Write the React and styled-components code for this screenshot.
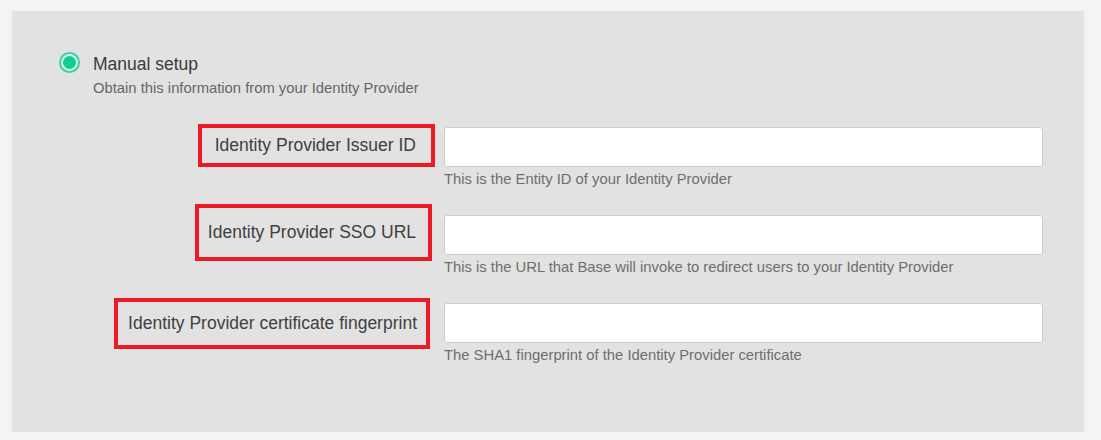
import React from "react";
import styled, { createGlobalStyle } from "styled-components";

const GlobalStyle = createGlobalStyle`
    html, body {
        margin: 0;
        padding: 0;
        background: #f4f4f4;
        font-family: "Liberation Sans", Arial, sans-serif;
    }
`;

const Page = styled.div`
    padding: 11px 17px 8px 12px;
    height: 440px;
    box-sizing: border-box;
`;

const Panel = styled.section`
    background: #e2e2e2;
    height: 421px;
    box-sizing: border-box;
    padding: 40px 0 0 0;
`;

const Choice = styled.div`
    display: flex;
    align-items: flex-start;
    gap: 13px;
    padding-left: 47px;
`;

const Radio = styled.span`
    width: 21px;
    height: 21px;
    box-sizing: border-box;
    border-radius: 50%;
    border: 2px solid #2ad9a4;
    background: #ececec;
    display: flex;
    align-items: center;
    justify-content: center;
    margin-top: 1px;
    flex-shrink: 0;

    &::after {
        content: "";
        width: 13px;
        height: 13px;
        border-radius: 50%;
        background: #0ccf92;
    }
`;

const ChoiceText = styled.div`
    display: flex;
    flex-direction: column;
`;

const ChoiceTitle = styled.span`
    font-size: 17.5px;
    line-height: 20px;
    color: #3a3a3a;
    margin-top: 3px;
`;

const ChoiceHint = styled.span`
    font-size: 14.8px;
    line-height: 17px;
    color: #666;
    margin-top: 6px;
`;

const Form = styled.div`
    display: flex;
    flex-direction: column;
    gap: 27px;
    margin-top: 30px;
`;

const Row = styled.div`
    display: grid;
    grid-template-columns: 428px 599px;
    column-gap: 4px;
    align-items: start;
`;

const LabelCell = styled.div`
    grid-row: 1;
    grid-column: 1;
    display: flex;
    justify-content: flex-end;
    margin-bottom: -30px;
`;

// red annotation box around the label
const Label = styled.label`
    display: inline-block;
    font-size: 17.5px;
    line-height: 19px;
    color: #404040;
    white-space: nowrap;
    border: 4px solid #ed1c24;
    padding: ${p => p.$py}px ${p => p.$pr}px ${p => p.$py}px ${p => p.$pl}px;
    margin-top: ${p => p.$top}px;
    margin-right: ${p => p.$right}px;
`;

const Input = styled.input`
    grid-row: 1;
    grid-column: 2;
    height: 40px;
    box-sizing: border-box;
    border: 1px solid #cccccc;
    border-radius: 3px;
    background: #fff;
    margin: 0;
    padding: 0 10px;
    font: inherit;
    outline: none;
`;

const Help = styled.span`
    grid-row: 2;
    grid-column: 2;
    font-size: 14.8px;
    line-height: 17px;
    color: #6e6e6e;
    margin-top: 4px;
`;

const fields = [
    {
        label: "Identity Provider Issuer ID",
        help: "This is the Entity ID of your Identity Provider",
        box: { py: 8, pl: 13, pr: 15, top: -3, right: 5 },
    },
    {
        label: "Identity Provider SSO URL",
        help: "This is the URL that Base will invoke to redirect users to your Identity Provider",
        box: { py: 15, pl: 9, pr: 12, top: -11, right: 8 },
    },
    {
        label: "Identity Provider certificate fingerprint",
        help: "The SHA1 fingerprint of the Identity Provider certificate",
        box: { py: 12, pl: 10, pr: 9, top: -5, right: 10 },
    },
];

export default function App() {
    return (
        <Page>
            <GlobalStyle />
            <Panel>
                <Choice>
                    <Radio />
                    <ChoiceText>
                        <ChoiceTitle>Manual setup</ChoiceTitle>
                        <ChoiceHint>Obtain this information from your Identity Provider</ChoiceHint>
                    </ChoiceText>
                </Choice>
                <Form>
                    {fields.map(f => (
                        <Row key={f.label}>
                            <LabelCell>
                                <Label
                                    $py={f.box.py}
                                    $pl={f.box.pl}
                                    $pr={f.box.pr}
                                    $top={f.box.top}
                                    $right={f.box.right}
                                >
                                    {f.label}
                                </Label>
                            </LabelCell>
                            <Input type="text" />
                            <Help>{f.help}</Help>
                        </Row>
                    ))}
                </Form>
            </Panel>
        </Page>
    );
}
